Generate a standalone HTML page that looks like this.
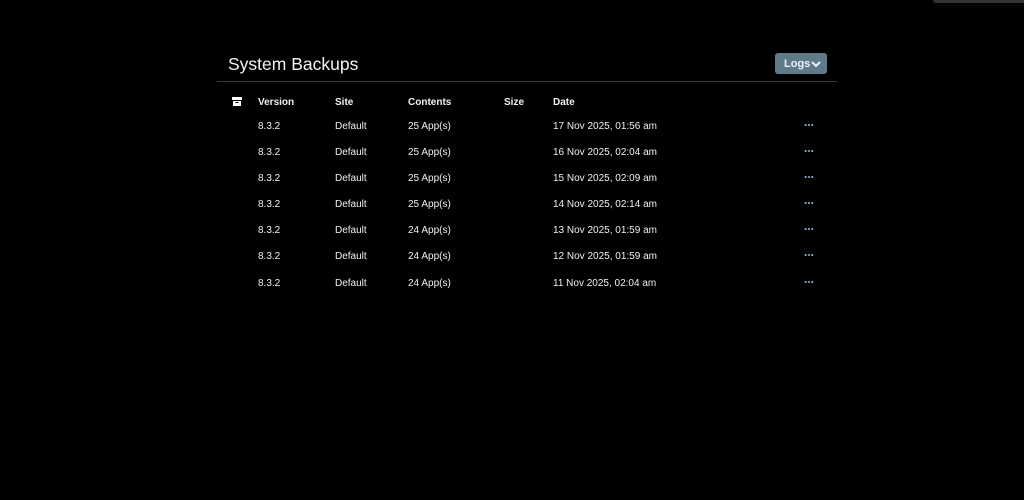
<!DOCTYPE html>
<html><head><style>
body{margin:0;background:#000;width:1024px;height:500px;overflow:hidden;font-family:"Liberation Sans",sans-serif;color:#fff;position:relative}
.t{position:absolute;left:228px;top:54px;font-size:17.5px;color:#f2f2f2}
.btn{position:absolute;left:775px;top:53px;width:52px;height:21px;background:#5f7a88;border-radius:3px;font-size:11px;font-weight:bold;color:#eef}
.btn span{position:absolute;left:9px;top:5px;line-height:12px}
.btn svg{position:absolute;left:810px;top:8px}
.hr{position:absolute;left:217px;top:81px;width:620px;height:1px;background:#3a3a3a}
.bar{position:absolute;left:933px;top:0;width:91px;height:3px;background:#333;border-radius:0 0 0 3px}
.c{position:absolute;font-size:10px;line-height:12px;color:#f0f0f0;white-space:nowrap}
.h{font-weight:bold}
.d{position:absolute;left:804px;width:10px;height:2px;background:radial-gradient(circle,#8fa6c8 0.9px,transparent 1.1px) 0 0/3.3px 2px repeat-x}
</style></head><body>
<div class="bar"></div>
<div class="t">System Backups</div>
<div class="btn"><span>Logs</span><svg style="position:absolute;left:36px;top:8px" width="10" height="7" viewBox="0 0 10 7"><path d="M1 1l4 4 4-4" stroke="#eef" stroke-width="2" fill="none"/></svg></div>
<div class="hr"></div>
<svg style="position:absolute;left:232px;top:97px" width="10" height="9" viewBox="0 0 10 9"><rect x="0" y="0" width="10" height="3" fill="#fff"/><rect x="1" y="4" width="8" height="5" fill="#fff"/><rect x="3.5" y="5" width="3" height="1" fill="#000"/></svg>
<div class="c h" style="left:258px;top:97px">Version</div>
<div class="c h" style="left:335px;top:97px">Site</div>
<div class="c h" style="left:408px;top:97px">Contents</div>
<div class="c h" style="left:504px;top:97px">Size</div>
<div class="c h" style="left:553px;top:97px">Date</div>
<div class="c" style="left:258px;top:121px">8.3.2</div><div class="c" style="left:335px;top:121px">Default</div><div class="c" style="left:408px;top:121px">25 App(s)</div><div class="c" style="left:553px;top:121px">17 Nov 2025, 01:56 am</div><div class="d" style="top:124px"></div>
<div class="c" style="left:258px;top:147px">8.3.2</div><div class="c" style="left:335px;top:147px">Default</div><div class="c" style="left:408px;top:147px">25 App(s)</div><div class="c" style="left:553px;top:147px">16 Nov 2025, 02:04 am</div><div class="d" style="top:150px"></div>
<div class="c" style="left:258px;top:173px">8.3.2</div><div class="c" style="left:335px;top:173px">Default</div><div class="c" style="left:408px;top:173px">25 App(s)</div><div class="c" style="left:553px;top:173px">15 Nov 2025, 02:09 am</div><div class="d" style="top:176px"></div>
<div class="c" style="left:258px;top:199px">8.3.2</div><div class="c" style="left:335px;top:199px">Default</div><div class="c" style="left:408px;top:199px">25 App(s)</div><div class="c" style="left:553px;top:199px">14 Nov 2025, 02:14 am</div><div class="d" style="top:202px"></div>
<div class="c" style="left:258px;top:225px">8.3.2</div><div class="c" style="left:335px;top:225px">Default</div><div class="c" style="left:408px;top:225px">24 App(s)</div><div class="c" style="left:553px;top:225px">13 Nov 2025, 01:59 am</div><div class="d" style="top:228px"></div>
<div class="c" style="left:258px;top:251px">8.3.2</div><div class="c" style="left:335px;top:251px">Default</div><div class="c" style="left:408px;top:251px">24 App(s)</div><div class="c" style="left:553px;top:251px">12 Nov 2025, 01:59 am</div><div class="d" style="top:254px"></div>
<div class="c" style="left:258px;top:278px">8.3.2</div><div class="c" style="left:335px;top:278px">Default</div><div class="c" style="left:408px;top:278px">24 App(s)</div><div class="c" style="left:553px;top:278px">11 Nov 2025, 02:04 am</div><div class="d" style="top:281px"></div>
</body></html>
